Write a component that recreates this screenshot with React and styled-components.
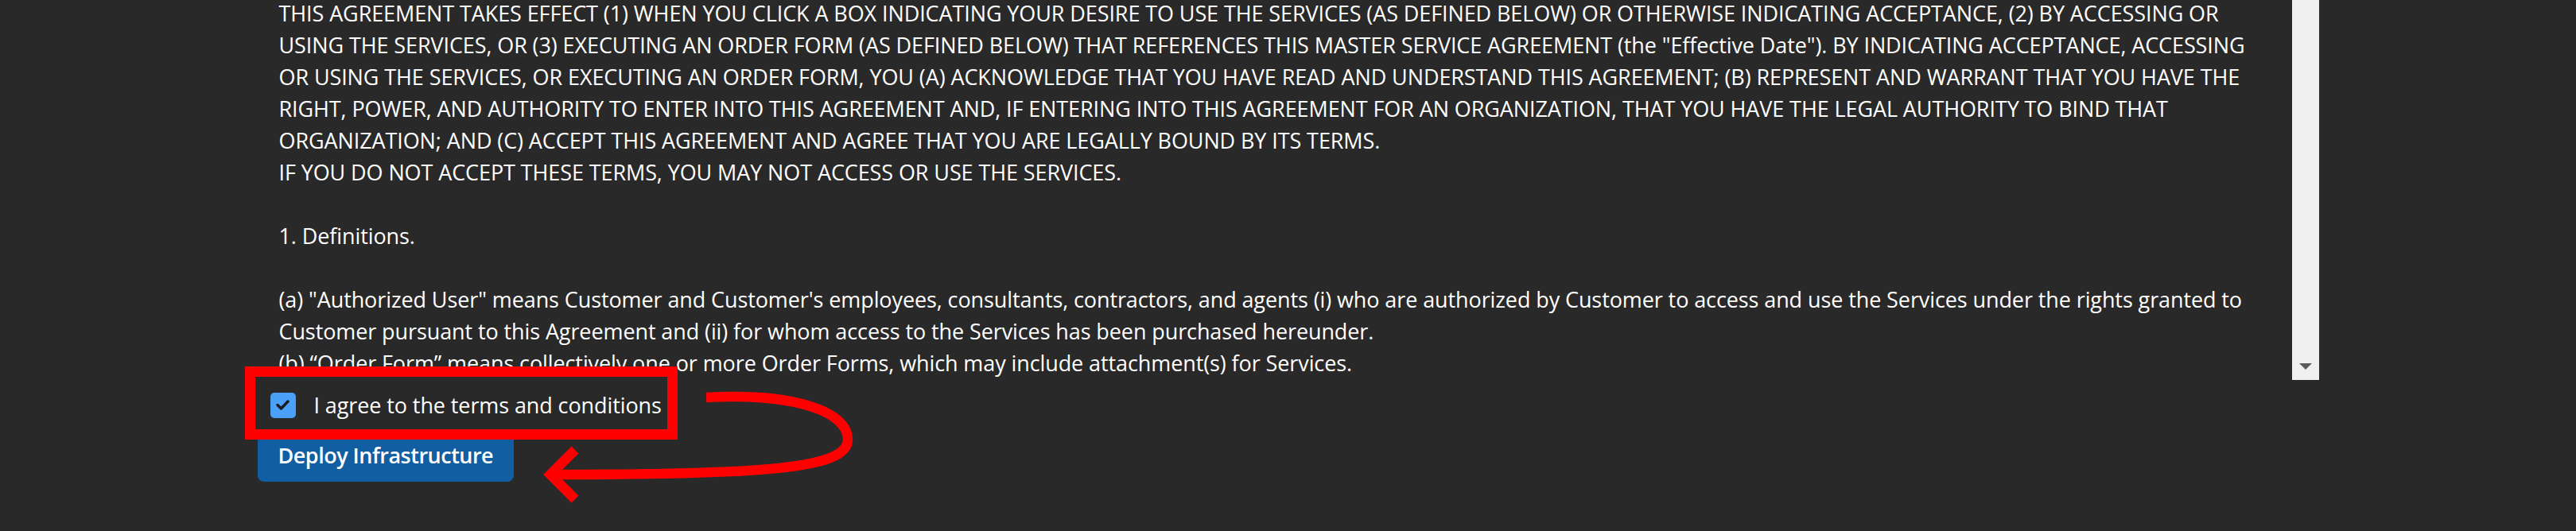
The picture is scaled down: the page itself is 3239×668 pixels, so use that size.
import React from "react";
import styled, { createGlobalStyle } from "styled-components";

const GlobalStyle = createGlobalStyle`
  html, body {
    margin: 0;
    padding: 0;
    background: #292929;
  }
  body {
    min-height: 668px;
    font-family: "Open Sans", "Noto Sans", "Liberation Sans", sans-serif;
    color: #ffffff;
  }
`;

const Page = styled.div`
  position: relative;
  width: 100%;
  height: 668px;
  overflow: hidden;
  background: #292929;
`;

const Form = styled.div`
  width: 2592px;
  margin: 0 auto;
  display: flex;
  flex-direction: column;
  align-items: flex-start;
`;

const ScrollBox = styled.div`
  align-self: stretch;
  height: 478px;
  display: flex;
  flex-direction: row;
  overflow: hidden;
`;

const TermsPane = styled.div`
  flex: 1;
  padding: 0 27px;
  overflow: hidden;
`;

const TermsText = styled.div`
  margin-top: -3px;
  font-size: 27px;
  letter-spacing: -0.1px;
  line-height: 40px;
  white-space: pre;
  color: #ffffff;
`;

const Line = styled.div`
  height: 40px;
`;

const ScrollTrack = styled.div`
  width: 34px;
  background: #f0f0f0;
  display: flex;
  flex-direction: column;
  justify-content: flex-end;
`;

const ScrollButton = styled.div`
  height: 34px;
  display: flex;
  align-items: center;
  justify-content: center;
`;

const CheckRow = styled.label`
  display: flex;
  align-items: center;
  gap: 23px;
  padding: 16px 0 0 16px;
  cursor: pointer;
`;

const CheckBox = styled.span`
  width: 32px;
  height: 32px;
  border-radius: 5px;
  background: #4ba0f7;
  display: flex;
  align-items: center;
  justify-content: center;
  flex-shrink: 0;
`;

const CheckLabel = styled.span`
  font-size: 27px;
  letter-spacing: -0.1px;
  line-height: 32px;
  color: #ffffff;
`;

const DeployButton = styled.button`
  margin-top: 14px;
  height: 66px;
  padding: 0 26px;
  border: none;
  border-radius: 8px;
  background: #115ea3;
  color: #ffffff;
  font-family: "Open Sans", "Noto Sans", "Liberation Sans", sans-serif;
  font-size: 27px;
  letter-spacing: -0.5px;
  font-weight: 600;
  line-height: 66px;
  cursor: pointer;
`;

const Overlay = styled.svg`
  position: absolute;
  left: 0;
  top: 0;
  width: 3239px;
  height: 668px;
  pointer-events: none;
`;

const lines = [
  "THIS AGREEMENT TAKES EFFECT (1) WHEN YOU CLICK A BOX INDICATING YOUR DESIRE TO USE THE SERVICES (AS DEFINED BELOW) OR OTHERWISE INDICATING ACCEPTANCE, (2) BY ACCESSING OR",
  "USING THE SERVICES, OR (3) EXECUTING AN ORDER FORM (AS DEFINED BELOW) THAT REFERENCES THIS MASTER SERVICE AGREEMENT (the \"Effective Date\"). BY INDICATING ACCEPTANCE, ACCESSING",
  "OR USING THE SERVICES, OR EXECUTING AN ORDER FORM, YOU (A) ACKNOWLEDGE THAT YOU HAVE READ AND UNDERSTAND THIS AGREEMENT; (B) REPRESENT AND WARRANT THAT YOU HAVE THE",
  "RIGHT, POWER, AND AUTHORITY TO ENTER INTO THIS AGREEMENT AND, IF ENTERING INTO THIS AGREEMENT FOR AN ORGANIZATION, THAT YOU HAVE THE LEGAL AUTHORITY TO BIND THAT",
  "ORGANIZATION; AND (C) ACCEPT THIS AGREEMENT AND AGREE THAT YOU ARE LEGALLY BOUND BY ITS TERMS.",
  "IF YOU DO NOT ACCEPT THESE TERMS, YOU MAY NOT ACCESS OR USE THE SERVICES.",
  "",
  "1. Definitions.",
  "",
  "(a) \"Authorized User\" means Customer and Customer's employees, consultants, contractors, and agents (i) who are authorized by Customer to access and use the Services under the rights granted to",
  "Customer pursuant to this Agreement and (ii) for whom access to the Services has been purchased hereunder.",
  "(b) \u201cOrder Form\u201d means collectively one or more Order Forms, which may include attachment(s) for Services.",
];

export default function App() {
  return (
    <Page>
      <GlobalStyle />
      <Form>
        <ScrollBox>
          <TermsPane>
            <TermsText>
              {lines.map((l, i) => (
                <Line key={i}>{l}</Line>
              ))}
            </TermsText>
          </TermsPane>
          <ScrollTrack>
            <ScrollButton>
              <svg width="16" height="8" viewBox="0 0 16 8">
                <polygon points="0,0 16,0 8,8" fill="#5a5a5a" />
              </svg>
            </ScrollButton>
          </ScrollTrack>
        </ScrollBox>
        <CheckRow>
          <CheckBox>
            <svg width="32" height="32" viewBox="0 0 32 32">
              <polyline
                points="9,15.5 13.5,20 22,11"
                fill="none"
                stroke="#1d1d1d"
                strokeWidth="3.5"
                strokeLinecap="round"
                strokeLinejoin="round"
              />
            </svg>
          </CheckBox>
          <CheckLabel>I agree to the terms and conditions</CheckLabel>
        </CheckRow>
        <DeployButton>Deploy Infrastructure</DeployButton>
      </Form>
      <Overlay viewBox="0 0 3239 668">
        <rect x="314.5" y="467.5" width="531" height="79" fill="none" stroke="#ff0000" strokeWidth="13" />
        <path
          d="M 888 500 C 1000 494, 1066 518, 1066 553 C 1066 590, 960 597, 692 597"
          fill="none"
          stroke="#ff0000"
          strokeWidth="12.5"
        />
        <path
          d="M 723 566 L 692 597 L 723 628"
          fill="none"
          stroke="#ff0000"
          strokeWidth="12.5"
          strokeLinejoin="miter"
        />
      </Overlay>
    </Page>
  );
}
